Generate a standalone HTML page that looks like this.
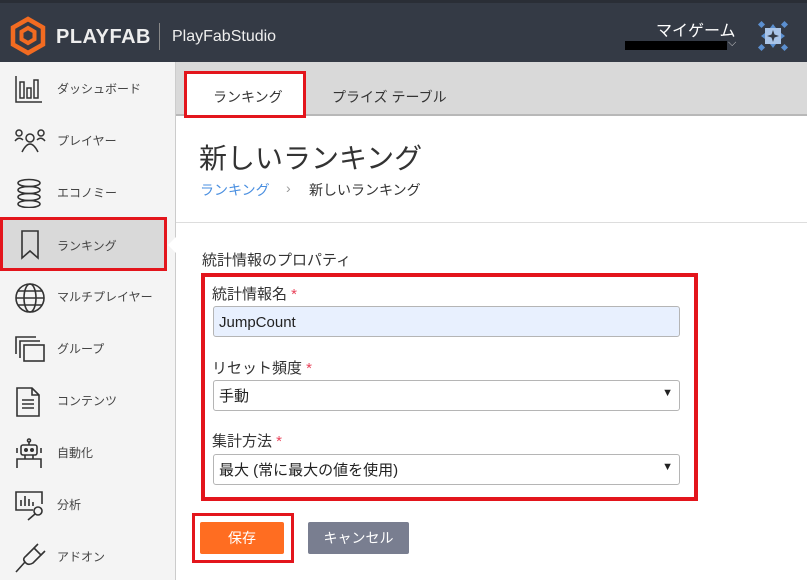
<!DOCTYPE html>
<html><head><meta charset="utf-8"><style>
*{margin:0;padding:0;box-sizing:border-box}
body{width:807px;height:580px;overflow:hidden;position:relative;background:#fff;font-family:"Liberation Sans","Noto Sans CJK JP",sans-serif;color:#333}
.a{position:absolute}
#hdr{left:0;top:0;width:807px;height:62px;background:#343a45;border-top:3px solid #2a2e36}
#side{left:0;top:62px;width:176px;height:518px;background:#f4f4f4;border-right:1px solid #ccc}
.it{position:absolute;left:0;width:175px;height:52px}
.it svg{position:absolute;left:14px;top:12px}
.it span{position:absolute;left:57px;top:18px;font-size:12px;color:#444}
#tabs{left:176px;top:62px;width:631px;height:54px;background:#d9d9d9;border-bottom:2px solid #b8b8b8}
.lbl{font-size:15px;color:#333}
.req{color:#e8435a}
.inp{position:absolute;left:213px;width:467px;height:31px;border:1px solid #b5b5b5;border-radius:3px;font-size:15px;padding:4px 5px;color:#222}
.arr{position:absolute;right:6px;top:6px;font-size:11px}
</style></head><body>
<div id="hdr" class="a">
 <svg class="a" style="left:9px;top:13px" width="38" height="40" viewBox="0 0 38 40"><path d="M19 3L34 11.5V28.5L19 37L4 28.5V11.5Z" fill="none" stroke="#f26b21" stroke-width="4.5"/><path d="M19 12L25.5 15.8V23.2L19 27L12.5 23.2V15.8Z" fill="none" stroke="#f26b21" stroke-width="4"/></svg>
 <div class="a" style="left:56px;top:23px;font-size:20px;font-weight:bold;color:#eee;letter-spacing:0.5px">PLAYFAB</div>
 <div class="a" style="left:159px;top:20px;width:1px;height:27px;background:#888"></div>
 <div class="a" style="left:172px;top:25px;font-size:16px;color:#eee">PlayFabStudio</div>
 <div class="a" style="left:656px;top:14px;font-size:16px;color:#fff">マイゲーム</div>
 <div class="a" style="left:625px;top:38px;width:102px;height:9px;background:#000"></div>
 <div class="a" style="left:728px;top:34px;font-size:11px;color:#ccc">⌵</div>
 <svg class="a" style="left:756px;top:16px" width="34" height="34" viewBox="0 0 34 34"><rect x="9" y="9" width="16" height="16" fill="#a9c4e8"/><path d="M17 5L20 9H14Z M17 29L20 25H14Z M5 17L9 14V20Z M29 17L25 14V20Z" fill="#5b8fd0"/><rect x="3" y="3" width="5" height="5" fill="#5b8fd0" transform="rotate(45 5.5 5.5)"/><rect x="26" y="3" width="5" height="5" fill="#5b8fd0" transform="rotate(45 28.5 5.5)"/><rect x="3" y="26" width="5" height="5" fill="#5b8fd0" transform="rotate(45 5.5 28.5)"/><rect x="26" y="26" width="5" height="5" fill="#5b8fd0" transform="rotate(45 28.5 28.5)"/><path d="M17 11L18.5 15.5L23 17L18.5 18.5L17 23L15.5 18.5L11 17L15.5 15.5Z" fill="#343a45"/></svg>
</div>
<div id="side" class="a">
 <div class="it" style="top:0"><svg width="30" height="30" viewBox="0 0 30 30" fill="none" stroke="#333" stroke-width="1.5"><path d="M2 2V28H28"/><rect x="6" y="8" width="4" height="16"/><rect x="13" y="14" width="4" height="10"/><rect x="20" y="6" width="4" height="18"/></svg><span>ダッシュボード</span></div>
 <div class="it" style="top:52px"><svg width="32" height="30" viewBox="0 0 32 30" fill="none" stroke="#333" stroke-width="1.5"><circle cx="5" cy="7" r="3"/><circle cx="27" cy="7" r="3"/><circle cx="16" cy="12" r="4"/><path d="M1 15Q5 10 9 14M31 15Q27 10 23 14M8 26Q16 10 24 26"/></svg><span>プレイヤー</span></div>
 <div class="it" style="top:104px"><svg width="30" height="30" viewBox="0 0 30 30" fill="none" stroke="#333" stroke-width="1.6"><ellipse cx="15" cy="5" rx="11" ry="3.5"/><ellipse cx="15" cy="12" rx="11" ry="3.5"/><ellipse cx="15" cy="19" rx="11" ry="3.5"/><ellipse cx="15" cy="26" rx="11" ry="3.5"/></svg><span>エコノミー</span></div>
 <div class="it" style="top:155px;background:#d9d9d9;border:3px solid #e3151c;width:167px;height:54px"><svg style="left:15px;top:9px" width="24" height="32" viewBox="0 0 24 32" fill="none" stroke="#333" stroke-width="1.6"><path d="M4 2H20V29L12 22L4 29Z"/></svg><span style="top:17px;left:54px">ランキング</span></div>
 <div class="a" style="left:168px;top:175px;width:0;height:0;border-top:8px solid transparent;border-bottom:8px solid transparent;border-right:8px solid #fff"></div>
 <div class="it" style="top:208px"><svg width="32" height="32" viewBox="0 0 32 32" fill="none" stroke="#333" stroke-width="1.6"><circle cx="16" cy="16" r="14"/><ellipse cx="16" cy="16" rx="6" ry="14"/><path d="M2 16H30M4 9H28M4 23H28"/></svg><span>マルチプレイヤー</span></div>
 <div class="it" style="top:260px"><svg width="32" height="30" viewBox="0 0 32 30" fill="none" stroke="#333" stroke-width="1.6"><path d="M2 20V3H22"/><path d="M6 24V7H26"/><rect x="10" y="11" width="20" height="16"/></svg><span>グループ</span></div>
 <div class="it" style="top:312px"><svg width="28" height="32" viewBox="0 0 28 32" fill="none" stroke="#333" stroke-width="1.6"><path d="M3 2H18L25 9V30H3Z M18 2V9H25"/><path d="M8 14H20M8 18H20M8 22H20"/></svg><span>コンテンツ</span></div>
 <div class="it" style="top:364px"><svg width="30" height="32" viewBox="0 0 30 32" fill="none" stroke="#333" stroke-width="1.6"><circle cx="15" cy="2.5" r="1.5"/><path d="M15 4V7"/><rect x="7" y="7" width="16" height="10" rx="2"/><circle cx="12" cy="12" r="1.2" fill="#333"/><circle cx="18" cy="12" r="1.2" fill="#333"/><path d="M3 10V15M27 10V15M11 17V21M19 17V21M3 30V21H27V30"/></svg><span>自動化</span></div>
 <div class="it" style="top:416px"><svg width="32" height="32" viewBox="0 0 32 32" fill="none" stroke="#333" stroke-width="1.6"><path d="M19 20H2V2H28V14"/><path d="M7 16V10M11 16V6M15 16V9M19 16V12"/><circle cx="24" cy="21" r="4"/><path d="M21 24L14 30"/></svg><span>分析</span></div>
 <div class="it" style="top:468px"><svg width="32" height="32" viewBox="0 0 32 32" fill="none" stroke="#333" stroke-width="1.6"><path d="M12 14L20 6L27 13L19 21Q14 24 11 20Q8 17 12 14Z"/><path d="M20 6L24 2M27 13L31 9M11 20L2 30"/></svg><span>アドオン</span></div>
</div>
<div id="tabs" class="a">
 <div class="a" style="left:8px;top:9px;width:122px;height:47px;background:#fff;border:3px solid #e3151c"></div>
 <div class="a" style="left:37px;top:25px;font-size:14px;color:#333">ランキング</div>
 <div class="a" style="left:156px;top:25px;font-size:14px;color:#333">プライズ テーブル</div>
</div>
<div class="a" style="left:199px;top:137px;font-size:28px;color:#333">新しいランキング</div>
<div class="a" style="left:200px;top:180px;font-size:14px;color:#4a8fe0">ランキング</div>
<div class="a" style="left:286px;top:180px;font-size:14px;color:#999">›</div>
<div class="a" style="left:309px;top:180px;font-size:14px;color:#333">新しいランキング</div>
<div class="a" style="left:176px;top:222px;width:631px;height:1px;background:#ddd"></div>
<div class="a lbl" style="left:202px;top:249px">統計情報のプロパティ</div>
<div class="a" style="left:201px;top:273px;width:497px;height:228px;border:4px solid #e3151c"></div>
<div class="a lbl" style="left:212px;top:283px">統計情報名 <span class="req">*</span></div>
<div class="inp" style="top:306px;background:#e8f0fe;padding-top:7px">JumpCount</div>
<div class="a lbl" style="left:212px;top:357px">リセット頻度 <span class="req">*</span></div>
<div class="inp" style="top:380px;background:#fff">手動<span class="arr">▼</span></div>
<div class="a lbl" style="left:212px;top:430px">集計方法 <span class="req">*</span></div>
<div class="inp" style="top:454px;background:#fff">最大 (常に最大の値を使用)<span class="arr">▼</span></div>
<div class="a" style="left:192px;top:513px;width:102px;height:50px;border:3px solid #e3151c"></div>
<div class="a" style="left:200px;top:522px;width:84px;height:32px;background:#ff6d21;border-radius:2px;color:#fff;font-size:14px;text-align:center;line-height:32px">保存</div>
<div class="a" style="left:308px;top:522px;width:101px;height:32px;background:#797e90;border-radius:2px;color:#fff;font-size:14px;text-align:center;line-height:32px">キャンセル</div>
</body></html>
